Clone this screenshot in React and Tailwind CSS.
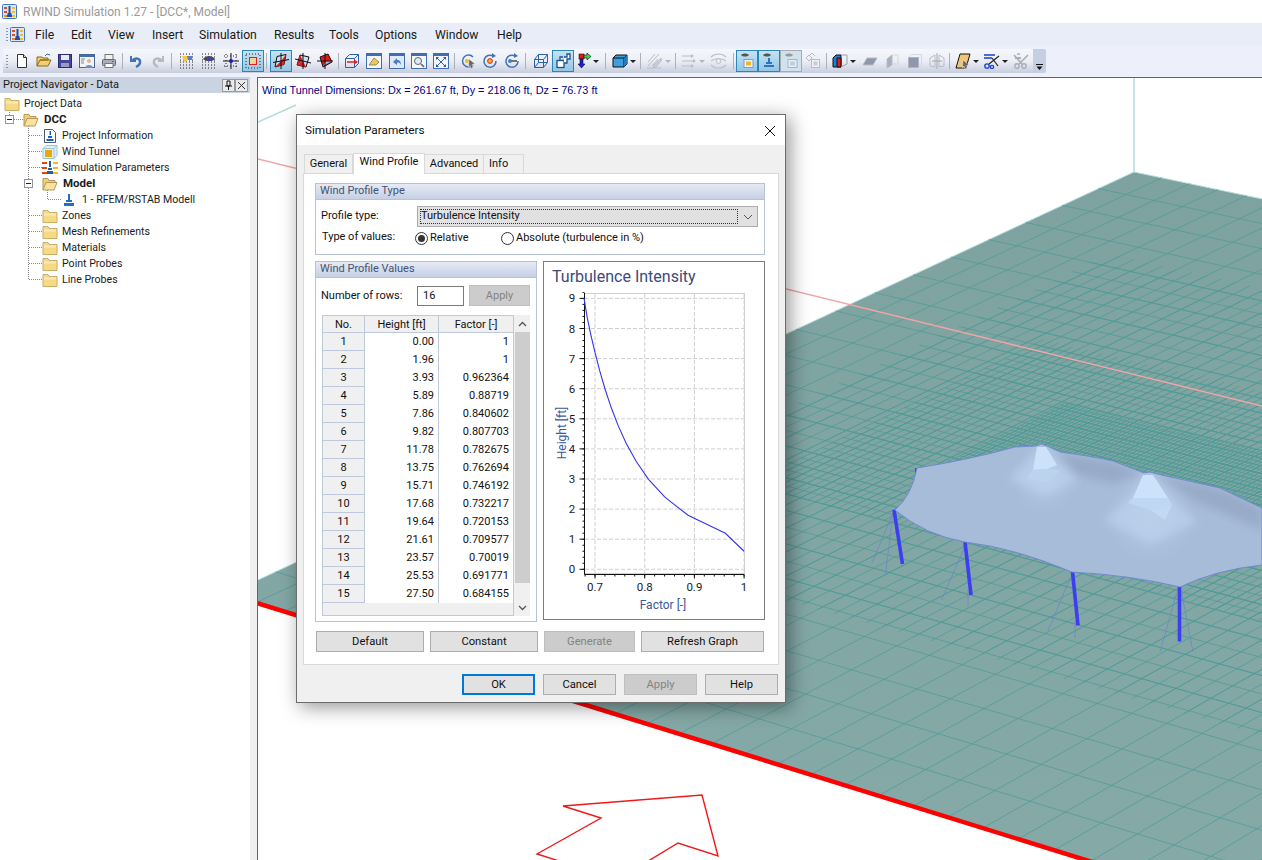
import React from 'react';

// ---------- ground plane helpers (corners in screen px) ----------
const T = [1134, 172];
const L = [228, 594];
const B = [1950, 1128];
const R = [2767, 515];

const makeHomography = () => {
  const dx1 = L[0] - B[0], dx2 = R[0] - B[0], sx = T[0] - L[0] + B[0] - R[0];
  const dy1 = L[1] - B[1], dy2 = R[1] - B[1], sy = T[1] - L[1] + B[1] - R[1];
  const den = dx1 * dy2 - dx2 * dy1;
  const g = (sx * dy2 - dx2 * sy) / den;
  const h = (dx1 * sy - sx * dy1) / den;
  return {
    a: L[0] - T[0] + g * L[0], b: R[0] - T[0] + h * R[0], c: T[0],
    d: L[1] - T[1] + g * L[1], e: R[1] - T[1] + h * R[1], f: T[1],
    g, h,
  };
};
const H = makeHomography();
const project = (u, v) => {
  const w = H.g * u + H.h * v + 1;
  return [(H.a * u + H.b * v + H.c) / w, (H.d * u + H.e * v + H.f) / w];
};

// mesh refinement boxes: every level halves the cell size inside its box
const U_CELL = 1 / 22;
const V_CELL = 1 / 48;
const boxes = [
  { u0: 0, u1: 1, v0: 0, v1: 1 },
  { u0: 0.16, u1: 0.8, v0: 0.076, v1: 0.6 },
  { u0: 0.33, u1: 0.66, v0: 0.13, v1: 0.5 },
  { u0: 0.42, u1: 0.58, v0: 0.2, v1: 0.45 },
];
const seg = (a, b) => `M${a[0].toFixed(1)} ${a[1].toFixed(1)}L${b[0].toFixed(1)} ${b[1].toFixed(1)}`;
const gridPath = () => {
  let d = '';
  boxes.forEach((box, level) => {
    const du = U_CELL / 2 ** level;
    const dv = V_CELL / 2 ** level;
    for (let u = du; u < 1; u += du) {
      if (u > box.u0 && u < box.u1) d += seg(project(u, box.v0), project(u, box.v1));
    }
    for (let v = dv; v < 1; v += dv) {
      if (v > box.v0 && v < box.v1) d += seg(project(box.u0, v), project(box.u1, v));
    }
  });
  return d;
};

const ROOF =
  'M895 510Q912 495 917 468Q968 460 1015 447L1036 446L1041 444L1047 446L1060 452Q1090 456 1113 461L1144 473L1150 472L1157 474L1220 488L1262 508L1262 565Q1215 570 1180 587Q1130 575 1072 572Q1015 548 965 542Q925 535 895 510Z';

const columns = [
  [894, 510, 902.5, 564], [965, 542, 971, 595], [1072.5, 572, 1078, 625.5],
  [1179.5, 587, 1179.5, 641.5], [923.5, 518, 925, 524.5], [916.7, 468, 917.3, 475],
];
const cables = [
  [893, 513, 872, 563], [892.7, 513, 885.7, 574], [965, 546, 941.7, 600], [1070.7, 576.7, 1048, 630.7],
  [1176.7, 593, 1160, 651.7], [1181.7, 593, 1193, 652], [968, 590, 968, 606], [1075, 620, 1075, 638],
];

const Scene = () => (
  <svg className="absolute inset-0" width="1004" height="782" viewBox="258 78 1004 782">
    <defs>
      <radialGradient id="glow">
        <stop offset="0%" stopColor="#c9dcf4" stopOpacity="0.9" />
        <stop offset="100%" stopColor="#c9dcf4" stopOpacity="0" />
      </radialGradient>
      <filter id="soft" x="-30%" y="-30%" width="160%" height="160%">
        <feGaussianBlur stdDeviation="5" />
      </filter>
      <filter id="softer" x="-30%" y="-30%" width="160%" height="160%">
        <feGaussianBlur stdDeviation="4" />
      </filter>
      <clipPath id="roofClip"><path d={ROOF} /></clipPath>
      <linearGradient id="planeFill" x1="0" y1="0" x2="0" y2="1">
        <stop offset="0%" stopColor="#7da2a0" />
        <stop offset="100%" stopColor="#88acaa" />
      </linearGradient>
    </defs>

    <path d="M258 122L296 105" stroke="#b4dcdc" strokeWidth="1.5" fill="none" />
    <path d="M1134 78V172" stroke="#b5dcdc" strokeWidth="1.5" fill="none" />
    <path d={`M${T}L${L}L${B}L${R}Z`} fill="url(#planeFill)" stroke="#b4dcdc" strokeWidth="1" />
    <path d={gridPath()} stroke="#4f9b97" strokeWidth="0.75" fill="none" />
    <path d="M258 159L1262 406" stroke="#f2a5a5" strokeWidth="1.3" fill="none" />
    <path d="M228 594L1950 1128" stroke="#ff0000" strokeWidth="4.5" fill="none" />

    {cables.map((c, i) => (
      <line key={i} x1={c[0]} y1={c[1]} x2={c[2]} y2={c[3]} stroke="#6f86c8" strokeWidth="0.8" />
    ))}
    {columns.map((c, i) => (
      <line key={i} x1={c[0]} y1={c[1]} x2={c[2]} y2={c[3]} stroke="#3d3df2" strokeWidth="3.6" />
    ))}

    <path d={ROOF} fill="#a7bcd9" />
    <g clipPath="url(#roofClip)">
      <path d="M1057 453L1113 461L1142 473L1113 484L1073 473Z" fill="#97abc9" filter="url(#soft)" />
      <path d="M1157 475L1220 488L1262 508L1262 530L1193 500Z" fill="#97abc9" filter="url(#soft)" />
      <path d="M1037 447Q1028 466 1008 478L1045 496L1078 480Q1058 466 1046 447Z" fill="#b4cae6" filter="url(#softer)" />
      <path d="M1143 475Q1133 498 1104 520L1150 544L1198 522Q1168 498 1153 475Z" fill="#b4cae6" filter="url(#softer)" />
      <circle cx="1045" cy="480" r="34" fill="url(#glow)" opacity="0.35" />
      <circle cx="1150" cy="518" r="46" fill="url(#glow)" opacity="0.35" />
      <path d="M1037 447L1046 447L1057 465L1047 469L1033 470Z" fill="#cbe2fa" />
      <path d="M1143 475L1153 475L1168 498L1150 498L1133 498Z" fill="#cbe2fa" />
      <path d="M1033 470L1047 469L1060 471L1048 482L1027 479Z" fill="#bcd3ee" />
      <path d="M1133 498L1168 498L1172 505L1150 510L1128 503Z" fill="#bfd7f2" />
      <path d="M1150 510L1172 505L1165 520Z" fill="#c2d9f3" />
    </g>
    <path d={ROOF} fill="none" stroke="#6f86d6" strokeWidth="0.9" />

    <path
      d="M563 806L702 795L718 856L678 843L640 866H575L537 854L601 818Z"
      fill="none"
      stroke="#f01818"
      strokeWidth="1.4"
    />
  </svg>
);

// ---------- icons ----------
const I = ({ children, w = 16 }) => (
  <svg width={w} height="16" viewBox={`0 0 ${w} 16`} className="shrink-0">
    {children}
  </svg>
);
const dots = (
  <path d="M1 1h14M1 4h14M1 12h14M1 15h14" stroke="#222" strokeWidth="1" strokeDasharray="1 2" fill="none" />
);

const Logo = () => (
  <svg width="15" height="15" viewBox="0 0 15 15" className="shrink-0">
    <rect x="0.5" y="0.5" width="14" height="14" rx="1" fill="#dbe7f6" stroke="#3f76c4" />
    <path d="M2 3h3v2H2zM2 7h3v2H2z" fill="#e8481c" />
    <path d="M2 11h3v2H2z" fill="#f08a18" />
    <path d="M10 3h3v2h-3zM10 7h3v2h-3zM10 11h3v2h-3z" fill="#f2bf26" />
    <path d="M6.5 2h2v7h-2zM5.5 9h4v2h-4zM5 11h5v2H5z" fill="#1e4ea8" />
  </svg>
);

const icons = {
  new: <I><path d="M3.5 1.5h6l3 3v10h-9z" fill="#fff" stroke="#333" /><path d="M9.5 1.5v3h3" fill="#ddd" stroke="#333" /></I>,
  open: <I><path d="M1 13V4h5l1 1h5v2H4L1 13h11l3-6H4" fill="#f3cf6e" stroke="#8a6a1e" /><path d="M9 3l2-2 3 1" fill="none" stroke="#3b6fb5" /></I>,
  save: <I><rect x="1.5" y="1.5" width="13" height="13" fill="#47479a" stroke="#2c2c70" /><rect x="4" y="2" width="8" height="5" fill="#e9e9f4" /><rect x="4" y="10" width="8" height="4" fill="#9a9ac6" /></I>,
  report: <I><rect x="0.5" y="1.5" width="15" height="13" fill="#f2f4f8" stroke="#46658f" /><rect x="1" y="2" width="14" height="2" fill="#3f6fb0" /><circle cx="10" cy="8" r="2" fill="#e8b48a" /><path d="M6 15c0-4 8-4 8 0z" fill="#6d8fc2" /><path d="M2 6h4M2 8h3M2 10h3" stroke="#8a8a8a" /></I>,
  print: <I><rect x="4" y="1.5" width="8" height="5" fill="#f2f2f2" stroke="#777" /><rect x="1.5" y="6.5" width="13" height="6" rx="1" fill="#a9aeb8" stroke="#666" /><rect x="4" y="10.5" width="8" height="4" fill="#fff" stroke="#777" /><rect x="11" y="8" width="2" height="1" fill="#3f6fb0" /></I>,
  undo: <I><path d="M3 3v5h5" fill="none" stroke="#3e74b8" strokeWidth="2" /><path d="M4 8c3-4 9-3 8 2-.4 2-2 3-4 4" fill="none" stroke="#3e74b8" strokeWidth="2.4" /></I>,
  redo: <I><path d="M13 3v5H8" fill="none" stroke="#b5bac4" strokeWidth="2" /><path d="M12 8C9 4 3 5 4 10c.4 2 2 3 4 4" fill="none" stroke="#b5bac4" strokeWidth="2.4" /></I>,
  sel1: <I>{dots}<path d="M1 7h14M1 9h14" stroke="#222" strokeDasharray="1 2" /><path d="M3 3h8l-3 5-3 1z" fill="#f2c94a" /><path d="M8 3h5v4H9z" fill="#5a7fc4" /></I>,
  sel2: <I>{dots}<path d="M1 7h14M1 9h14" stroke="#222" strokeDasharray="1 2" /><path d="M2 6c3-4 9-4 12 0-3 3-9 3-12 0z" fill="#4a4a55" /><circle cx="9" cy="6" r="2" fill="#3d3dc8" /></I>,
  sel3: <I><path d="M0 8h16M8 0v16" stroke="#111" /><path d="M3 1v14M13 1v14M1 3h14M1 13h14" stroke="#222" strokeDasharray="1 2" /><circle cx="8" cy="8" r="2" fill="#1c1cc4" /></I>,
  sel4: <I><path d="M1 1h14v14H1z" fill="none" stroke="#222" strokeDasharray="1 2" /><rect x="4.5" y="4.5" width="7" height="7" fill="#f2d49a" stroke="#e02020" /></I>,
  view1: <I><path d="M4 3.500l9-2-2 10-9 2.500z" fill="#cfe0f6" stroke="#111" /><path d="M2 14l6-6 3 3.500z" fill="#e81818" /><path d="M8 8l5-6.500-2 10z" fill="#e81818" /><path d="M8 0v16M0 9.500L16 6.500" stroke="#111" /></I>,
  view2: <I><path d="M5 2l9 2-3 10-9-2z" fill="#cfe0f6" stroke="#111" /><path d="M2 12l3-10 3 6z" fill="#e81818" /><path d="M8 8l3 6-9-2z" fill="#e81818" /><path d="M8 0v16M0 6l16 4" stroke="#111" /></I>,
  view3: <I><path d="M3 4l8-3 4 8-9 5z" fill="#e81818" stroke="#111" /><path d="M9 8h6l-9 5z" fill="#9ab6e0" /><path d="M8 0v16M0 8h16" stroke="#111" /></I>,
  box: <I><path d="M1.5 5.5l4-4h9v9l-4 4h-9zM1.5 5.5h9v9M10.5 5.5l4-4" fill="none" stroke="#2f5fa8" /><path d="M3 9h9" stroke="#e02020" strokeWidth="1.5" /><path d="M10 6.5l4 2.5-4 2.5z" fill="#e02020" /></I>,
  win1: <I><rect x="0.5" y="0.5" width="15" height="15" fill="#f4f6fa" stroke="#3f6fb0" /><rect x="1" y="1" width="14" height="2" fill="#3f6fb0" /><path d="M3 12l5-7 5 4-3 3z" fill="#f2c94a" stroke="#555" strokeWidth="0.6" /></I>,
  win2: <I><rect x="0.5" y="0.5" width="15" height="15" fill="#dfe8f5" stroke="#3f6fb0" /><rect x="1" y="1" width="14" height="2" fill="#3f6fb0" /><path d="M4 9l4-4v2c3 0 4 2 4 5-1-2-2-3-4-2v2z" fill="#4a7cc0" /></I>,
  win3: <I><rect x="0.5" y="0.5" width="15" height="15" fill="#f4f6fa" stroke="#3f6fb0" /><rect x="1" y="1" width="14" height="2" fill="#3f6fb0" /><circle cx="7" cy="8" r="3.5" fill="#dceaf8" stroke="#666" /><path d="M10 11l3 3" stroke="#666" strokeWidth="1.6" /></I>,
  win4: <I><rect x="0.5" y="0.5" width="15" height="15" fill="#f4f6fa" stroke="#3f6fb0" /><rect x="1" y="1" width="14" height="2" fill="#3f6fb0" /><path d="M4 5l8 8M12 5l-8 8" stroke="#2f5fa8" /><path d="M3 4h3L3 7zM13 4v3l-3-3zM3 14v-3l3 3zM13 14h-3l3-3z" fill="#2f5fa8" /></I>,
  rot1: <I><path d="M13 4A6 6 0 1 0 13 12" fill="none" stroke="#3e74b8" strokeWidth="1.5" /><circle cx="7" cy="8" r="2" fill="#f2b626" /><path d="M9 6l6 5-3 .5L13 15l-2 .5-1-3-1.5 2z" fill="#666" stroke="#fff" strokeWidth="0.4" /></I>,
  rot2: <I><path d="M14 8A6 6 0 1 1 11 3" fill="none" stroke="#3e74b8" strokeWidth="1.5" /><path d="M10 0l4 3-4 2z" fill="#3e74b8" /><circle cx="8" cy="8" r="2.4" fill="#f2b626" stroke="#e02020" /></I>,
  rot3: <I><path d="M14 8A6 6 0 1 1 11 3" fill="none" stroke="#3e74b8" strokeWidth="1.5" /><path d="M10 0l4 3-4 2z" fill="#3e74b8" /><path d="M6 8h7" stroke="#555" strokeWidth="1.6" /><circle cx="6" cy="8" r="2" fill="#4a7cc0" /></I>,
  wire: <I><path d="M1.5 6.5l4-5h9v8l-4 5h-9zM1.5 6.5h9v8M10.5 6.5l4-5M5.5 1.5v8h9M5.5 9.5l-4 5" fill="none" stroke="#2f5fa8" /></I>,
  squares: <I><rect x="2" y="7.5" width="7" height="7" fill="#fff" stroke="#1d4f94" strokeWidth="1.3" /><path d="M5 7V4h3M9 4h3V1h3v5h-3v4h-3" fill="#fff" stroke="#1d4f94" strokeWidth="1.3" /></I>,
  axis: <I w={13}><rect x="1" y="1" width="5" height="5" fill="#e81818" stroke="#111" strokeWidth="0.6" /><path d="M6 2h3V0l4 3.500-4 3.500V5H6z" fill="#22dd44" stroke="#111" strokeWidth="0.6" /><path d="M2 6h3v5h2l-3.500 4L0 11h2z" fill="#1c1cd8" stroke="#111" strokeWidth="0.6" /></I>,
  cube: <I><path d="M1 5l3-3h11v9l-3 3H1z" fill="#3f9ee0" stroke="#111" /><path d="M1 5h11v9M12 5l3-3" fill="none" stroke="#111" /><path d="M12 5l3-3v9l-3 3z" fill="#2a78b8" /></I>,
  hatch: <I><path d="M1 9l7-8M1 13l11-12M5 13l6-7" stroke="#b7bcc6" /><path d="M7 12l7-7 1 2-6 7-3 1z" fill="#c8ccd4" stroke="#aab" strokeWidth="0.5" /><path d="M0 15h14" stroke="#b7bcc6" /></I>,
  arrows: <I><path d="M1 3h10M1 8h12M1 13h10" stroke="#b7bcc6" strokeWidth="1.2" /><path d="M10 1l3 2-3 2zM12 6l3 2-3 2zM10 11l3 2-3 2z" fill="#b7bcc6" /></I>,
  waves: <I w={17}><path d="M1 4c4-4 11-4 15 0M1 12c4 4 11 4 15 0M1 8c4-3 11-3 15 0" fill="none" stroke="#bcc1cb" strokeWidth="1.2" /><circle cx="8.500" cy="8" r="2.500" fill="none" stroke="#bcc1cb" /></I>,
  eyeCube: <I><path d="M2 2c2-2 6-2 8 0-2 2-6 2-8 0z" fill="#555" /><rect x="5" y="6.500" width="9" height="8" fill="#e9f3fa" stroke="#7aa0c8" /><rect x="7" y="8.500" width="5" height="4" fill="#f2b626" /></I>,
  eyeStack: <I><path d="M2 2c2-2 6-2 8 0-2 2-6 2-8 0z" fill="#555" /><path d="M7 5h2v4H7zM5 9h6v2H5zM3 12h10v2H3z" fill="#2f72c4" /></I>,
  eyeGray: <I><path d="M2 2c2-2 6-2 8 0-2 2-6 2-8 0z" fill="#999" /><rect x="5" y="6.500" width="9" height="8" fill="#e4edf3" stroke="#a8b4c0" /><rect x="7" y="8.500" width="5" height="4" fill="#c4ced8" /></I>,
  grayStack: <I><path d="M1 5l3-3 3 3-3 3zM4 3l3-3 3 3" fill="none" stroke="#b7bcc6" /><rect x="6.500" y="6.500" width="8" height="8" fill="#eef0f4" stroke="#b7bcc6" /><rect x="8.500" y="8.500" width="4" height="4" fill="#c8ccd4" /></I>,
  redCube: <I><path d="M1 5l3-3h5v12H1z" fill="#1f7fd8" stroke="#111" /><path d="M5 5h4v9H5z" fill="#e81818" stroke="#111" /><path d="M9 2h6v9l-6 3" fill="none" stroke="#9aa0aa" /></I>,
  planeH: <I><path d="M1 12l4-7h10l-4 7z" fill="#8e97ad" stroke="#b7bcc6" /></I>,
  planeV: <I><path d="M3 6l5-4v10l-5 3z" fill="#a8afc0" stroke="#b7bcc6" /><path d="M8 2h6v9H8" fill="none" stroke="#d5d8de" /></I>,
  planeF: <I><rect x="2.500" y="4.500" width="10" height="10" fill="#8e97ad" stroke="#b0b5c0" /><path d="M2.500 4.500l3-3h10v10l-3 3" fill="none" stroke="#d5d8de" /></I>,
  planeC: <I><path d="M1 5l5-3v12l-5-1zM10 2l5 3v8l-5 1z" fill="none" stroke="#b7bcc6" /><path d="M3 8h10" stroke="#a0a6b4" /><path d="M8 0v16" stroke="#a0a6b4" /></I>,
  paper: <I><path d="M5 1h10l-4 14H1z" fill="#efc678" stroke="#111" /><path d="M8 7l6 5-3 .5 1 3-2 .5-1-3-1.500 2z" fill="#666" stroke="#fff" strokeWidth="0.4" /></I>,
  scissors: <I w={17}><path d="M1 2h11M1 5h8" stroke="#1d3fd0" strokeWidth="1.6" /><path d="M16 3L6 11M9 5l6 8" stroke="#222" strokeWidth="1.2" /><circle cx="4" cy="13" r="2.200" fill="none" stroke="#1d3fd0" strokeWidth="1.3" /><circle cx="9" cy="14" r="1.600" fill="none" stroke="#1d3fd0" strokeWidth="1.3" /></I>,
  scissorsGray: <I><path d="M1 2l8 9M15 2l-9 9M4 1h3" stroke="#a9aeb9" strokeWidth="1.6" /><circle cx="4" cy="13" r="2.200" fill="none" stroke="#a9aeb9" strokeWidth="1.4" /><circle cx="11" cy="13" r="2.200" fill="none" stroke="#a9aeb9" strokeWidth="1.4" /><path d="M2 5h6" stroke="#a9aeb9" strokeWidth="2" /></I>,
};

const tools = [
  ['new', 22], ['open', 21], ['save', 22], ['report', 22], ['print', 22], ['|', 5],
  ['undo', 22], ['redo', 22], ['|', 6],
  ['sel1', 23], ['sel2', 22], ['sel3', 22], ['sel4', 22, 'on'], ['|', 6],
  ['view1', 22, 'on'], ['view2', 22], ['view3', 22], ['|', 5],
  ['box', 22], ['win1', 22], ['win2', 23], ['win3', 22], ['win4', 22], ['|', 5],
  ['rot1', 22], ['rot2', 22], ['rot3', 22], ['|', 7],
  ['wire', 22], ['squares', 22, 'on'], ['axis', 29, null, 'dark'], ['|', 6],
  ['cube', 29, null, 'dark'], ['|', 7],
  ['hatch', 28, null, 'gray'], ['|', 7],
  ['arrows', 26, null, 'gray'], ['waves', 25], ['|', 5],
  ['eyeCube', 22, 'on'], ['eyeStack', 22, 'on'], ['eyeGray', 22, 'off'], ['grayStack', 22], ['|', 6],
  ['redCube', 27, null, 'dark'], ['planeH', 25], ['planeV', 20], ['planeF', 24], ['planeC', 21], ['|', 6],
  ['paper', 28, null, 'dark'], ['scissors', 28, null, 'dark'], ['scissorsGray', 24],
];

const Caret = ({ tone }) => (
  <span className={tone === 'dark' ? 'ml-[2px] h-0 w-0 border-x-[3px] border-t-[3px] border-x-transparent border-t-[#222]' : 'ml-[2px] h-0 w-0 border-x-[3px] border-t-[3px] border-x-transparent border-t-[#b0b5c0]'} />
);

const ToolItem = ({ item }) => {
  const [name, w, state, caret] = item;
  if (name === '|') {
    return (
      <div style={{ width: w }} className="flex h-full items-center">
        <div className="ml-[2px] h-[16px] w-px bg-[#aab0bf]" />
      </div>
    );
  }
  let cls = 'flex h-[22px] items-center justify-center';
  if (state === 'on') cls += ' border border-[#2b86b8] bg-gradient-to-b from-[#c6e2f3] to-[#93c6e4]';
  if (state === 'off') cls += ' border border-[#a5abb2] bg-[#cfe2ee]';
  return (
    <div style={{ width: w }} className={cls}>
      {icons[name]}
      {caret && <Caret tone={caret} />}
    </div>
  );
};

const Gripper = () => (
  <div className="flex w-[8px] flex-col items-center gap-[2px]">
    {[0, 1, 2, 3, 4].map((i) => <span key={i} className="h-px w-[2px] bg-[#8d96ab]" />)}
  </div>
);

// ---------- project navigator ----------
const FolderClosed = () => (
  <I><path d="M1 4.500V2.500h5l1 2h8v10H1z" fill="#f6d983" stroke="#c9ad68" /><path d="M2 5.500h12v2H2z" fill="#fbeab4" /></I>
);
const FolderOpen = () => (
  <I><path d="M1 14V2.500h5l1 2h6v2" fill="#f2cf70" stroke="#b5975a" /><path d="M1 14l3-7.500h11l-3 7.500z" fill="#f9e3a0" stroke="#b5975a" /></I>
);
const navIcons = {
  closed: <FolderClosed />,
  open: <FolderOpen />,
  info: <I><path d="M2.500 1.500h8l3 3v10h-11z" fill="#fff" stroke="#4b5a72" /><path d="M7.500 3h1.500v4H7.500zM6 8h4v2H6zM4.500 11h7v2h-7z" fill="#1f5fb0" /></I>,
  tunnel: <I><path d="M1 4.500l3-3h11v10l-3 3H1z" fill="#dff0f8" stroke="#9cc6de" /><path d="M1 4.500h11v10M12 4.500l3-3" fill="none" stroke="#9cc6de" /><rect x="3" y="6" width="7" height="7" fill="#e8a80e" /></I>,
  params: <I><path d="M0 2h5v2H0zM0 7h5v2H0zM0 12h5v2H0z" fill="#e04a12" /><path d="M11 2h5v2h-5zM11 7h5v2h-5zM11 12h5v2h-5z" fill="#f2b81e" /><path d="M7 1h2v6H7zM6 8h4v2H6zM5 11h6v3H5z" fill="#1f5fb0" /></I>,
  model: <I><path d="M7 2h2v6H7zM5 8h6v2H5zM3 11h10v3H3z" fill="#1f6fc4" /></I>,
};

const tree = [
  { icon: 'closed', label: 'Project Data', row: 'pl-[4px]', text: 'ml-[4px]' },
  { icon: 'open', label: 'DCC', row: 'pl-[23px]', text: 'ml-[5px] text-[11.5px] font-bold' },
  { icon: 'info', label: 'Project Information', row: 'pl-[42px]', text: 'ml-[4px]' },
  { icon: 'tunnel', label: 'Wind Tunnel', row: 'pl-[42px]', text: 'ml-[4px]' },
  { icon: 'params', label: 'Simulation Parameters', row: 'pl-[42px]', text: 'ml-[4px]' },
  { icon: 'open', label: 'Model', row: 'pl-[42px]', text: 'ml-[5px] text-[11.5px] font-bold' },
  { icon: 'model', label: '1 - RFEM/RSTAB Modell', row: 'pl-[61px]', text: 'ml-[5px]' },
  { icon: 'closed', label: 'Zones', row: 'pl-[42px]', text: 'ml-[4px]' },
  { icon: 'closed', label: 'Mesh Refinements', row: 'pl-[42px]', text: 'ml-[4px]' },
  { icon: 'closed', label: 'Materials', row: 'pl-[42px]', text: 'ml-[4px]' },
  { icon: 'closed', label: 'Point Probes', row: 'pl-[42px]', text: 'ml-[4px]' },
  { icon: 'closed', label: 'Line Probes', row: 'pl-[42px]', text: 'ml-[4px]' },
];

const Navigator = () => (
  <div className="flex w-[250px] shrink-0 flex-col bg-white">
    <div className="flex h-[16px] items-center justify-between bg-[#c9d3e1] pl-[3px] pr-[2px] text-[11px] text-[#1b1b1b]">
      <span>Project Navigator - Data</span>
      <div className="flex">
        <span className="flex h-[13px] w-[13px] items-center justify-center border border-[#9a9a9a] bg-[#e9e9e9]">
          <svg width="9" height="10" viewBox="0 0 9 10"><path d="M3 1h3v5H3zM1 6h7M4.500 6v4" fill="none" stroke="#111" /></svg>
        </span>
        <span className="flex h-[13px] w-[13px] items-center justify-center border border-[#9a9a9a] bg-[#e9e9e9]">
          <svg width="7" height="7" viewBox="0 0 7 7"><path d="M0 0l7 7M7 0L0 7" stroke="#333" /></svg>
        </span>
      </div>
    </div>
    <div className="relative pt-[3px] text-[10.6px] text-[#1c1c1c]">
      <svg className="absolute left-0 top-0" width="90" height="200" viewBox="0 93 90 200">
        <g stroke="#888" strokeDasharray="1 1" fill="none">
          <path d="M9.500 110V115M14 119.500H23" />
          <path d="M28.500 126V279.500M29 135.500H42M29 151.500H42M29 167.500H42M29 183.500H33" />
          <path d="M29 215.500H42M29 231.500H42M29 247.500H42M29 263.500H42M29 279.500H42" />
          <path d="M47.500 188V199.500H62" />
        </g>
        <g fill="#fff" stroke="#8d96a5">
          <rect x="5.500" y="115.500" width="8" height="8" />
          <rect x="24.500" y="179.500" width="8" height="8" />
        </g>
        <path d="M7 119.500h5M26 183.500h5" stroke="#222" />
      </svg>
      {tree.map((t) => (
        <div key={t.label} className={`relative flex h-[16px] items-center ${t.row}`}>
          {navIcons[t.icon]}
          <span className={t.text}>{t.label}</span>
        </div>
      ))}
    </div>
  </div>
);

// ---------- dialog ----------
const rows = [
  [1, '0.00', '1'], [2, '1.96', '1'], [3, '3.93', '0.962364'], [4, '5.89', '0.88719'], [5, '7.86', '0.840602'],
  [6, '9.82', '0.807703'], [7, '11.78', '0.782675'], [8, '13.75', '0.762694'], [9, '15.71', '0.746192'],
  [10, '17.68', '0.732217'], [11, '19.64', '0.720153'], [12, '21.61', '0.709577'], [13, '23.57', '0.70019'],
  [14, '25.53', '0.691771'], [15, '27.50', '0.684155'],
];

const curve = [
  [1, 0.6], [0.962364, 1.198], [0.88719, 1.795], [0.840602, 2.396], [0.807703, 2.99], [0.782675, 3.59],
  [0.762694, 4.19], [0.746192, 4.79], [0.732217, 5.39], [0.720153, 5.99], [0.709577, 6.59], [0.70019, 7.19],
  [0.691771, 7.78], [0.684155, 8.38], [0.678, 9],
];
const fx = (f) => 595 + (f - 0.7) * 497;
const hy = (h) => 569.3 - 30.1 * h;

const Chart = () => {
  const xs = [0.7, 0.8, 0.9, 1];
  const ys = [0, 1, 2, 3, 4, 5, 6, 7, 8, 9];
  const minorY = [];
  for (let i = 0; i <= 46; i++) minorY.push(i * 0.2);
  const minorX = [];
  for (let i = 0; i <= 16; i++) minorX.push(0.68 + i * 0.02);
  return (
    <div className="ml-[6px] flex h-[359px] w-[222px] flex-col border border-[#7c7c7c] bg-white">
      <div className="h-[30px] pl-[8px] pt-[4px] text-[16px] leading-[22px] text-[#3c4a78]">Turbulence Intensity</div>
      <svg width="220" height="327" viewBox="544 292 220 327" className="font-['Roboto',sans-serif]">
        <rect x="584.500" y="293.500" width="160" height="280" fill="none" stroke="#d0d0d0" />
        {ys.map((v) => (
          <line key={v} x1="585" x2="744" y1={hy(v)} y2={hy(v)} stroke="#cfcfcf" strokeDasharray="4 2" />
        ))}
        {xs.map((v) => (
          <line key={v} x1={fx(v)} x2={fx(v)} y1="294" y2="574" stroke="#cfcfcf" strokeDasharray="4 2" />
        ))}
        <path d="M584.500 293V574.500H744" fill="none" stroke="#111" />
        {minorY.filter((v) => v < 9.3).map((v) => (
          <line key={v} x1="582.500" x2="584.500" y1={hy(v)} y2={hy(v)} stroke="#111" />
        ))}
        {ys.map((v) => (
          <line key={v} x1="579.500" x2="584.500" y1={hy(v)} y2={hy(v)} stroke="#111" />
        ))}
        {minorX.map((v) => (
          <line key={v} x1={fx(v)} x2={fx(v)} y1="574.500" y2="576.500" stroke="#111" />
        ))}
        {xs.map((v) => (
          <line key={v} x1={fx(v)} x2={fx(v)} y1="574.500" y2="578.500" stroke="#111" />
        ))}
        {ys.map((v) => (
          <text key={v} x="572" y={hy(v) + 4} textAnchor="middle" fontSize="11.5" fill="#1a1a2a">{v}</text>
        ))}
        {xs.map((v) => (
          <text key={v} x={fx(v)} y="591" textAnchor="middle" fontSize="11.5" fill="#1a1a2a">{v}</text>
        ))}
        <text x="663" y="609" textAnchor="middle" fontSize="12" fill="#3a5a9a">Factor [-]</text>
        <text x="566" y="433" textAnchor="middle" fontSize="12" fill="#3a5a9a" transform="rotate(-90 566 433)">Height [ft]</text>
        <polyline points={curve.map(([f, h]) => `${fx(f)},${hy(h)}`).join(' ')} fill="none" stroke="#3434ee" strokeWidth="1.1" />
      </svg>
    </div>
  );
};

const GroupHeader = ({ children }) => (
  <div className="flex h-[16px] items-center border-b border-[#b7c1d8] bg-gradient-to-b from-[#e6eaf4] to-[#c6d0e5] pb-px pl-[4px] text-[11px] text-[#44536f]">
    {children}
  </div>
);

const Btn = ({ w, disabled, children, primary }) => {
  let cls = 'flex items-center justify-center pt-px text-[11.2px]';
  if (primary) cls += ' h-[21px] border-2 border-[#0078d7] bg-[#e1e1e1] text-[#111]';
  else if (disabled) cls += ' h-[21px] border border-[#bfbfbf] bg-[#cccccc] text-[#838383]';
  else cls += ' h-[21px] border border-[#adadad] bg-[#e1e1e1] text-[#111]';
  return <div style={{ width: w }} className={cls}>{children}</div>;
};

const Radio = ({ on }) => (
  <span className="flex h-[13px] w-[13px] items-center justify-center rounded-full border border-[#333] bg-white">
    {on && <span className="h-[7px] w-[7px] rounded-full bg-[#333]" />}
  </span>
);

const Dialog = () => (
  <div className="absolute left-[38px] top-[36px] flex h-[589px] w-[490px] flex-col border border-[#6d6d6d] bg-[#f0f0f0] text-[11px] text-[#111] shadow-[4px_4px_18px_rgba(0,0,0,0.42)]">
    <div className="flex h-[30px] shrink-0 items-center justify-between bg-white pl-[8px] pr-[9px] pt-px text-[11.8px]">
      <span>Simulation Parameters</span>
      <svg width="12" height="12" viewBox="0 0 12 12"><path d="M1 1l10 10M11 1L1 11" stroke="#111" strokeWidth="1" /></svg>
    </div>

    <div className="mt-[7px] flex h-[21px] shrink-0 items-end pl-[7px]">
      <div className="flex h-[19px] w-[49px] items-center justify-center border border-b-0 border-[#d9d9d9] bg-[#f0f0f0]">General</div>
      <div className="relative z-10 -mb-px flex h-[21px] w-[72px] items-center justify-center border border-b-0 border-[#d9d9d9] bg-white pb-[3px]">Wind Profile</div>
      <div className="flex h-[19px] w-[59px] items-center justify-center border border-b-0 border-l-0 border-[#d9d9d9] bg-[#f0f0f0]">Advanced</div>
      <div className="flex h-[19px] w-[40px] items-center border border-b-0 border-l-0 border-[#d9d9d9] bg-[#f0f0f0] pl-[5px]">Info</div>
    </div>

    <div className="mx-[6px] flex h-[492px] flex-col border border-[#d9d9d9] bg-white pl-[11px] pt-[9px]">
      <div className="flex h-[72px] w-[450px] shrink-0 flex-col border border-[#b7c1d8]">
        <GroupHeader>Wind Profile Type</GroupHeader>
        <div className="mt-[6px] flex h-[21px] items-center pl-[5px]">
          <span className="w-[96px]">Profile type:</span>
          <div className="flex h-[21px] w-[341px] items-center border border-[#adadad] bg-[#e1e1e1] p-[2px]">
            <div className="flex h-full w-[318px] items-center border border-dotted border-[#333]">Turbulence Intensity</div>
            <svg className="ml-[5px]" width="10" height="6" viewBox="0 0 10 6"><path d="M1 1l4 4 4-4" fill="none" stroke="#555" /></svg>
          </div>
        </div>
        <div className="mt-px flex h-[21px] items-center pl-[6px]">
          <span className="-mt-[3px] w-[93px]">Type of values:</span>
          <Radio on />
          <span className="ml-[2px] w-[71px]">Relative</span>
          <Radio />
          <span className="ml-[2px]">Absolute (turbulence in %)</span>
        </div>
      </div>

      <div className="mt-[6px] flex shrink-0">
        <div className="flex h-[361px] w-[222px] flex-col border border-[#b7c1d8]">
          <GroupHeader>Wind Profile Values</GroupHeader>
          <div className="mt-[7px] flex h-[21px] items-center pl-[5px]">
            <span className="w-[96px] pt-px">Number of rows:</span>
            <div className="flex h-[20px] w-[47px] items-center border border-[#7a7a7a] bg-white pl-[5px] pt-px">16</div>
            <div className="ml-[5px] flex h-[21px] w-[61px] items-center justify-center border border-[#bfbfbf] bg-[#cccccc] pt-px text-[#838383]">Apply</div>
          </div>
          <div className="ml-[6px] mt-[9px] flex">
            <div className="flex h-[301px] w-[192px] flex-col border border-[#bfc8dd] bg-[#f0f0f0]">
              <div className="grid h-[17px] shrink-0 grid-cols-[42px_74px_1fr] border-b border-[#bfc8dd] text-center leading-[17px]">
                <span className="border-r border-[#bfc8dd]">No.</span>
                <span className="border-r border-[#bfc8dd]">Height [ft]</span>
                <span>Factor [-]</span>
              </div>
              {rows.map(([n, h, f]) => (
                <div key={n} className="grid h-[18px] shrink-0 grid-cols-[42px_74px_1fr] border-b border-[#bfc8dd] leading-[18px]">
                  <span className="border-r border-[#bfc8dd] text-center">{n}</span>
                  <span className="border-r border-[#bfc8dd] bg-white pr-[4px] text-right">{h}</span>
                  <span className="bg-white pr-[4px] text-right">{f}</span>
                </div>
              ))}
            </div>
            <div className="flex h-[301px] w-[16px] flex-col items-center bg-[#f0f0f0] pl-px">
              <div className="flex h-[17px] items-center">
                <svg width="9" height="6" viewBox="0 0 9 6"><path d="M1 5l3.500-3.500L8 5" fill="none" stroke="#555" strokeWidth="1.3" /></svg>
              </div>
              <div className="h-[251px] w-full bg-[#cdcdcd]" />
              <div className="mt-auto flex h-[17px] items-center">
                <svg width="9" height="6" viewBox="0 0 9 6"><path d="M1 1l3.500 3.500L8 1" fill="none" stroke="#555" strokeWidth="1.3" /></svg>
              </div>
            </div>
          </div>
        </div>
        <Chart />
      </div>

      <div className="ml-px mt-[9px] flex gap-[6px]">
        <Btn w={108}>Default</Btn>
        <Btn w={108}>Constant</Btn>
        <Btn w={91} disabled>Generate</Btn>
        <Btn w={123}>Refresh Graph</Btn>
      </div>
    </div>

    <div className="mt-[9px] flex justify-end gap-[8px] pr-[7px]">
      <Btn w={73} primary>OK</Btn>
      <Btn w={73}>Cancel</Btn>
      <Btn w={73} disabled>Apply</Btn>
      <Btn w={73}>Help</Btn>
    </div>
  </div>
);

const menus = [
  ['File', 'w-[36px]'], ['Edit', 'w-[37px]'], ['View', 'w-[44px]'], ['Insert', 'w-[47px]'], ['Simulation', 'w-[75px]'],
  ['Results', 'w-[55px]'], ['Tools', 'w-[46px]'], ['Options', 'w-[60px]'], ['Window', 'w-[62px]'], ['Help', 'w-[40px]'],
];

export default function App() {
  return (
    <div className="flex h-[860px] w-[1262px] flex-col overflow-hidden bg-white font-['Roboto',sans-serif]">
      <div className="flex h-[23px] shrink-0 items-center gap-[6px] bg-white pl-[2px] text-[12px] text-[#999]">
        <Logo />
        <span>RWIND Simulation 1.27 - [DCC*, Model]</span>
      </div>

      <div className="flex h-[23px] shrink-0 items-center bg-[#e9edf7] pl-[6px] text-[12.2px] text-[#1a1a1a]">
        <div className="flex w-[4px] flex-col gap-[2px]">
          {[0, 1, 2, 3, 4].map((i) => <span key={i} className="h-px w-[2px] bg-[#8d96ab]" />)}
        </div>
        <Logo />
        <div className="ml-[10px] flex pt-px">
          {menus.map(([m, w]) => <span key={m} className={w}>{m}</span>)}
        </div>
      </div>

      <div className="flex h-[31px] shrink-0 items-start bg-[#edf0fa] pl-[3px] pt-[3px]">
        <div className="flex h-[24px] w-[1030px] items-center bg-gradient-to-b from-[#f6f7fc] via-[#eceef6] to-[#c8cedd]">
          <Gripper />
          {tools.map((t, i) => <ToolItem key={i} item={t} />)}
        </div>
        <div className="flex h-[24px] w-[13px] items-end justify-center rounded-r-[2px] bg-[#c6cee1] pb-[3px]">
          <svg width="7" height="6" viewBox="0 0 7 6"><path d="M0 .5h7" stroke="#111" /><path d="M.5 2.500h6L3.500 6z" fill="#111" /></svg>
        </div>
      </div>

      <div className="flex min-h-0 flex-1">
        <Navigator />
        <div className="w-[7px] shrink-0 bg-[#f0f0f0]" />
        <div className="relative flex-1 border-l border-t border-[#646464] bg-white">
          <Scene />
          <div className="relative pl-[4px] pt-[4px] font-['Liberation_Sans',sans-serif] text-[10.85px] text-[#00007f]">
            Wind Tunnel Dimensions: Dx = 261.67 ft, Dy = 218.06 ft, Dz = 76.73 ft
          </div>
          <Dialog />
        </div>
      </div>
    </div>
  );
}
